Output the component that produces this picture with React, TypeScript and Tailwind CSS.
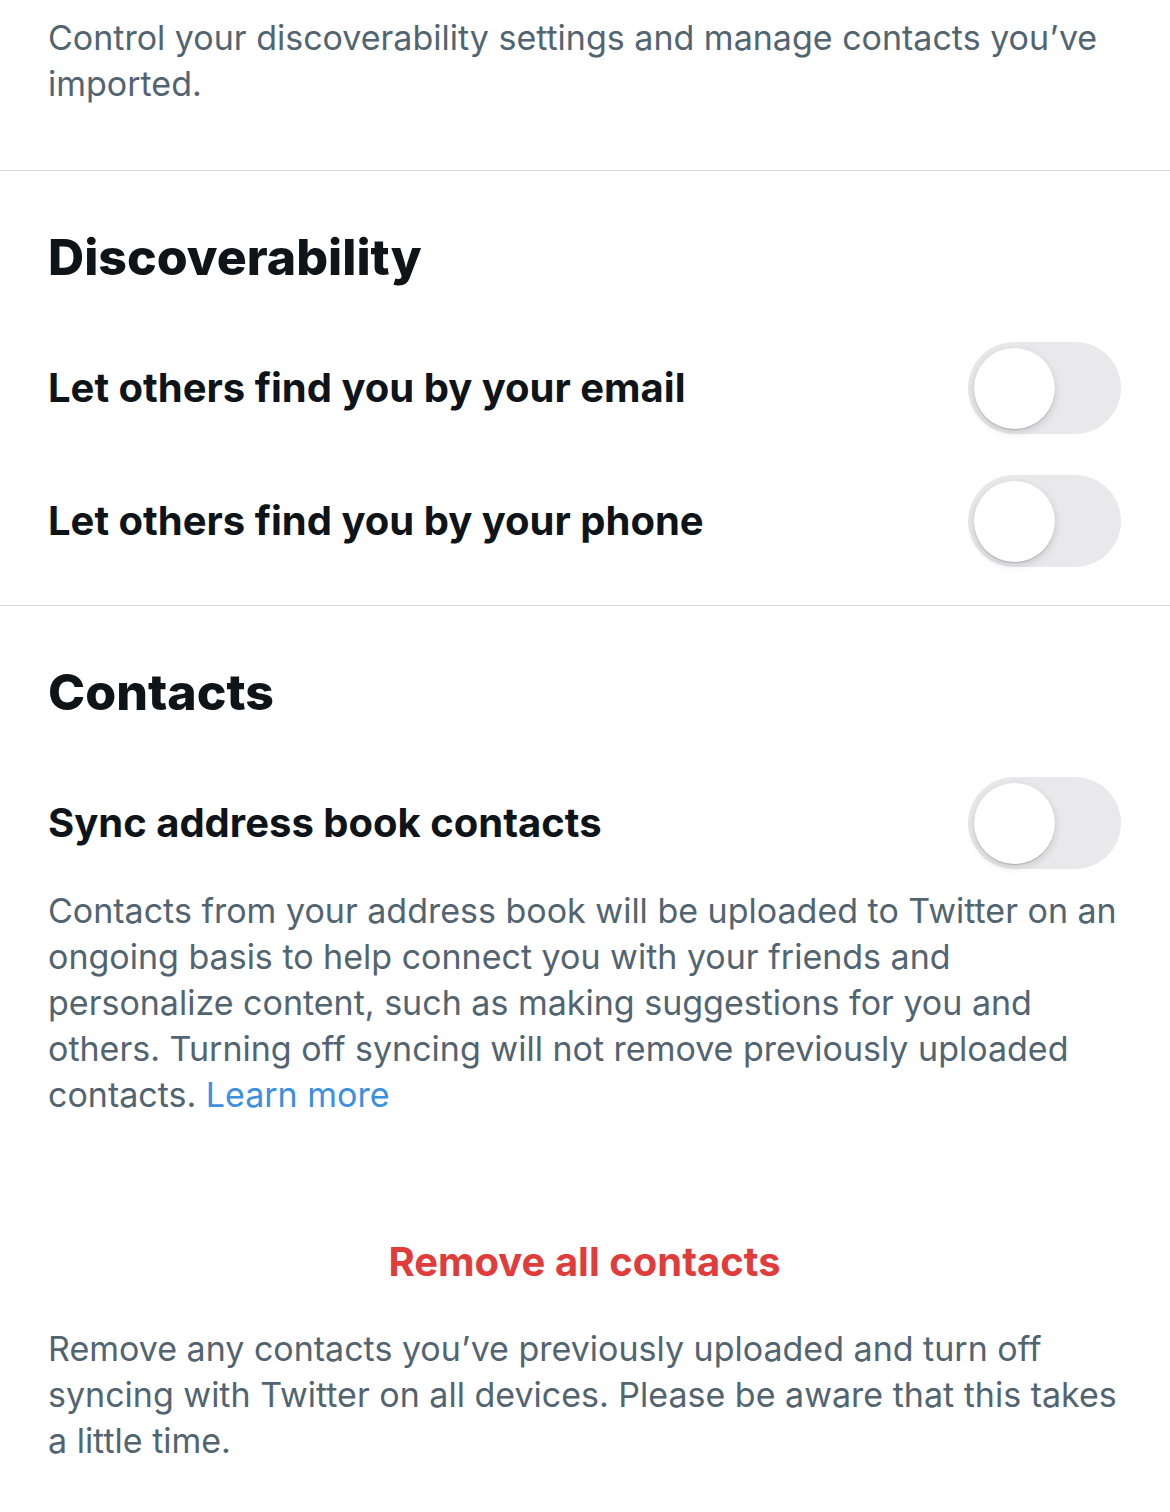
import React from 'react'

function Toggle() {
  return (
    <div className="flex h-[92px] w-[153px] shrink-0 items-center rounded-full bg-[#e9e9eb] pl-[6px]">
      <div className="h-[81px] w-[81px] rounded-full bg-white shadow-[0_3px_8px_rgba(0,0,0,0.15),0_1px_1px_rgba(0,0,0,0.16)]" />
    </div>
  )
}

function Row({ label }: { label: string }) {
  return (
    <div className="flex items-center justify-between">
      <span className="text-[40px] font-bold leading-[46px] text-[#0f1419]">{label}</span>
      <Toggle />
    </div>
  )
}

export default function App() {
  return (
    <div className="min-h-[1512px] w-[1170px] bg-white font-['Inter',sans-serif]">
      <div className="pb-[63px] pl-12 pr-[49px] pt-[15px]">
        <p className="text-[34px] leading-[46px] text-[#536471]">
          Control your discoverability settings and manage contacts you’ve imported.
        </p>
      </div>
      <div className="h-px bg-[#cfd9de]" />
      <div className="pb-[38px] pl-12 pr-[49px] pt-[58px]">
        <h2 className="text-[50px] font-extrabold leading-[56px] text-[#0f1419]">Discoverability</h2>
        <div className="mt-[57px] flex flex-col gap-[41px]">
          <Row label="Let others find you by your email" />
          <Row label="Let others find you by your phone" />
        </div>
      </div>
      <div className="h-px bg-[#cfd9de]" />
      <div className="pl-12 pr-[49px] pt-[58px]">
        <h2 className="text-[50px] font-extrabold leading-[56px] text-[#0f1419]">Contacts</h2>
        <div className="mt-[57px]">
          <Row label="Sync address book contacts" />
        </div>
        <p className="mt-[19px] text-[34px] leading-[46px] text-[#536471]">
          Contacts from your address book will be uploaded to Twitter on an ongoing basis to help connect you
          with your friends and personalize content, such as making suggestions for you and others. Turning off
          syncing will not remove previously uploaded contacts.{' '}
          <span className="text-[#3d8fe0]">Learn more</span>
        </p>
        <div className="mt-[121px] text-center text-[40px] font-bold leading-[46px] text-[#e03c3c]">
          Remove all contacts
        </div>
        <p className="mt-[41px] text-[34px] leading-[46px] text-[#536471]">
          Remove any contacts you’ve previously uploaded and turn off syncing with Twitter on all devices. Please
          be aware that this takes a little time.
        </p>
      </div>
    </div>
  )
}
